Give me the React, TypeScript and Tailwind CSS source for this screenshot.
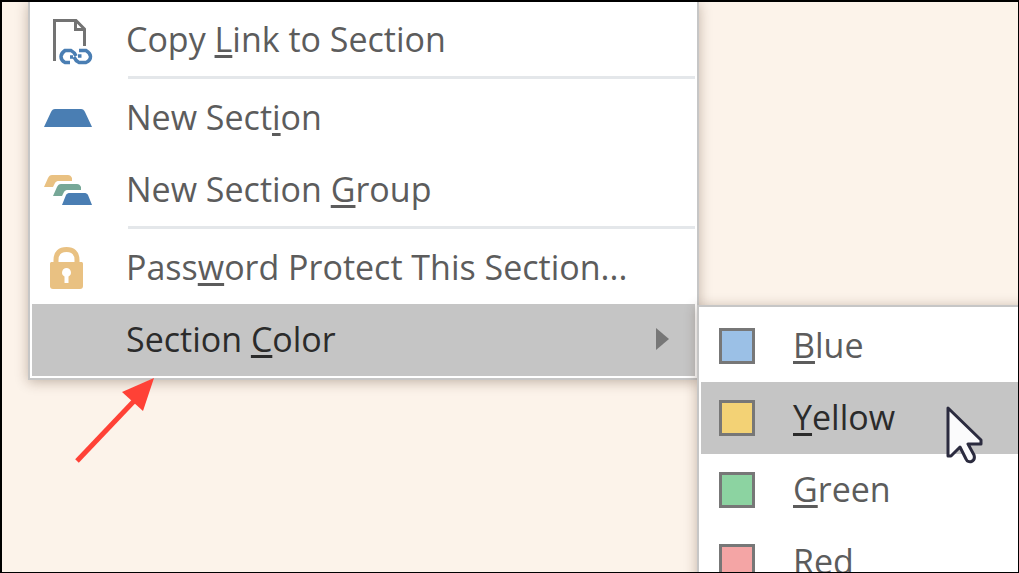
import type { ReactNode } from 'react';
import { clsx } from 'clsx';

interface MenuItemProps {
  icon?: ReactNode;
  children: ReactNode;
  active?: boolean;
  hasSubmenu?: boolean;
}

const COLORS = [
  { name: 'Blue', swatch: 'bg-[#9bc0e6]' },
  { name: 'Yellow', swatch: 'bg-[#f3d275]' },
  { name: 'Green', swatch: 'bg-[#8cd3a1]' },
  { name: 'Red', swatch: 'bg-[#f4a5a5]' },
];

function CopyLinkIcon() {
  return (
    <svg width="48" height="48" viewBox="0 0 48 48" fill="none" overflow="visible">
      <path d="M10.5 45V4.500H32L40.500 13V30" stroke="#737373" strokeWidth="3" />
      <path d="M31.500 5V13.500H40" stroke="#737373" strokeWidth="3" />
      <g stroke="#4a7eb3" strokeWidth="3.500">
        <path d="M26 46.500H21C19 45.500 17 43 17 40.500S19 36 21 34.500H27C29 35.500 31 37.500 32 40" />
        <path d="M35 34.500H42C44.500 36 46.500 38 46.500 40.500S44.500 45.500 42 46.500H35C33 45.500 31 43.500 30 41" />
        <path d="M26 41H29M34 40H37.500" />
      </g>
    </svg>
  );
}

function SectionIcon() {
  return (
    <svg width="48" height="48" viewBox="0 0 48 48">
      <path d="M0 33L7 18C8 16 9 15 11 15H37C39 15 40 16 41 18L48 33Z" fill="#4a7eb3" />
    </svg>
  );
}

function SectionGroupIcon() {
  return (
    <svg width="48" height="48" viewBox="0 0 48 48">
      <path d="M0 21L4 12C5 10 6 9 8 9H24C26 9 27 10 28 12V15H15C13 15 12 15.500 11 17L9 21Z" fill="#e9c182" />
      <path d="M9 30L13 21C14 19 15 18 17 18H33C35 18 36 19 37 21V24H24C22 24 21 24.500 20 26L18 30Z" fill="#76a797" />
      <path d="M18 39L22 29C23 27.500 24 27 26 27H40C42 27 43 27.500 44 29L48 39Z" fill="#4a7eb3" />
    </svg>
  );
}

function LockIcon() {
  return (
    <svg width="48" height="48" viewBox="0 0 48 48">
      <path d="M12 20V16C12 9 16 5.500 22.500 5.500S33 9 33 16V20" fill="none" stroke="#e9c182" strokeWidth="5" />
      <path d="M8 18H37C38.500 18 39 18.500 39 20V42C39 44 38 45 36 45H9C7 45 6 44 6 42V20C6 18.500 6.500 18 8 18Z" fill="#e9c182" />
      <path d="M22.500 24A4.500 4.500 0 0 1 24.500 32.500V39H20.500V32.500A4.500 4.500 0 0 1 22.500 24Z" fill="#fff" />
    </svg>
  );
}

function Cursor() {
  return (
    <svg className="pointer-events-none absolute top-6 left-[245px] z-10" width="38" height="60" viewBox="0 0 38 60">
      <path
        d="M2 2V50H5L14 41L20 53C22 58 30 56 28 49L22 38H35V34Z"
        fill="#fbfbfc"
        stroke="#2b2b3f"
        strokeWidth="3"
        strokeLinejoin="round"
      />
    </svg>
  );
}

// Underlined access key
function Key({ children }: { children: ReactNode }) {
  return <span className="underline decoration-[3px] underline-offset-[3px] [text-decoration-skip-ink:none]">{children}</span>;
}

function MenuItem({ icon, children, active, hasSubmenu }: MenuItemProps) {
  return (
    <button
      type="button"
      role="menuitem"
      aria-haspopup={hasSubmenu ? 'menu' : undefined}
      className={clsx(
        'flex h-[72px] w-full items-center pl-3 text-left',
        active ? 'bg-[#c5c5c5] text-[#2b2b2b]' : 'text-[#5c5c5c]',
      )}
    >
      <span className="mr-[34px] size-12 shrink-0">{icon}</span>
      <span className="grow pb-[2px] whitespace-nowrap">{children}</span>
      {hasSubmenu && (
        <svg className="mr-6" width="16" height="24" viewBox="0 0 16 24">
          <path d="M1 0L14 11L1 22Z" fill="#777" />
        </svg>
      )}
    </button>
  );
}

function Separator() {
  return <div role="separator" className="ml-24 h-[6px] border-t-[3px] border-[#e4e7ea]" />;
}

function ColorMenu() {
  return (
    <div
      role="menu"
      aria-label="Section Color"
      className="absolute top-px left-full ml-[2px] w-[420px] border-2 border-[#c6c6c6] bg-white px-[2px] py-[3px] shadow-[0_2px_12px_rgba(60,30,10,0.3)]"
    >
      {COLORS.map(({ name, swatch }) => {
        const active = name === 'Yellow';
        return (
          <div key={name} className="relative">
            <button
              type="button"
              role="menuitem"
              className={clsx(
                'flex h-[72px] w-full items-center pl-[18px] text-left',
                active ? 'bg-[#c5c5c5] text-[#2b2b2b]' : 'text-[#5c5c5c]',
              )}
            >
              <span className={clsx('mr-[38px] size-9 border-[3px] border-[#777]', swatch)} />
              <span className="pb-[2px]">
                <Key>{name[0]}</Key>
                {name.slice(1)}
              </span>
            </button>
            {active && <Cursor />}
          </div>
        );
      })}
    </div>
  );
}

export default function App() {
  return (
    <main className="relative h-screen overflow-hidden border-t-2 border-r border-b border-l-2 border-black bg-[#fcf3ea] pl-[26px] font-['Open_Sans',sans-serif] text-[34px] leading-none">
      <div
        role="menu"
        aria-label="Section"
        className="w-[671px] border-2 border-t-0 border-[#c6c6c6] bg-white px-[2px] py-[2px] shadow-[0_2px_12px_rgba(60,30,10,0.3)]"
      >
        <MenuItem icon={<CopyLinkIcon />}>
          Copy <Key>L</Key>ink to Section
        </MenuItem>
        <Separator />
        <MenuItem icon={<SectionIcon />}>
          New Sect<Key>i</Key>on
        </MenuItem>
        <MenuItem icon={<SectionGroupIcon />}>
          New Section <Key>G</Key>roup
        </MenuItem>
        <Separator />
        <MenuItem icon={<LockIcon />}>
          Pass<Key>w</Key>ord Protect This Section...
        </MenuItem>
        <div className="relative">
          <MenuItem active hasSubmenu>
            Section <Key>C</Key>olor
          </MenuItem>
          <ColorMenu />
        </div>
      </div>

      <svg className="pointer-events-none absolute top-[376px] left-[72px]" width="84" height="90" viewBox="0 0 84 90">
        <path d="M3 83L61 22" stroke="#ff4136" strokeWidth="5" />
        <path d="M80 0L48 14L69 33Z" fill="#ff4136" />
      </svg>
    </main>
  );
}
